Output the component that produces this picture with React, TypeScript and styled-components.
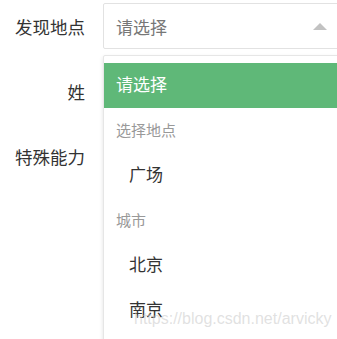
import styled, { createGlobalStyle } from 'styled-components';

const GlobalStyle = createGlobalStyle`
    html, body {
        margin: 0;
        padding: 0;
        background: #fff;
        overflow: hidden;
    }
    body {
        font-family: "Liberation Sans", "Noto Sans CJK SC", sans-serif;
    }
`;

const Page = styled.div`
    position: relative;
    width: 337px;
    height: 339px;
    overflow: hidden;
    padding-top: 3px;
    box-sizing: border-box;
`;

const FormItem = styled.div`
    display: flex;
    align-items: center;
    height: 46px;
    margin-bottom: 19px;
`;

const Label = styled.label`
    width: 85px;
    text-align: right;
    font-size: 17.5px;
    color: #333;
    flex: none;
`;

const SelectWrap = styled.div`
    position: relative;
    margin-left: 18px;
    flex: none;
    width: 260px;
    height: 46px;
`;

const SelectInput = styled.div`
    box-sizing: border-box;
    height: 100%;
    border: 1px solid #e2e2e2;
    border-radius: 2px;
    display: flex;
    align-items: center;
    padding-left: 12px;
    font-size: 17px;
    color: #777;
`;

const Edge = styled.span`
    position: absolute;
    left: 210px;
    top: 20px;
    width: 0;
    height: 0;
    border-left: 7.5px solid transparent;
    border-right: 7.5px solid transparent;
    border-bottom: 7px solid #c2c2c2;
`;

const Dropdown = styled.dl`
    position: absolute;
    top: 52px;
    left: 0;
    width: 260px;
    height: 300px;
    margin: 0;
    padding: 7px 0 0;
    box-sizing: border-box;
    background: #fff;
    border: 1px solid #e6e6e6;
    border-radius: 2px;
    box-shadow: 0 2px 4px rgba(0, 0, 0, 0.12);
    z-index: 2;
`;

const GroupTitle = styled.dt`
    height: 45px;
    line-height: 45px;
    padding-left: 12px;
    font-size: 15px;
    color: #999;
`;

const Option = styled.dd<{ $selected?: boolean; $grouped?: boolean }>`
    margin: 0;
    height: 45px;
    line-height: 45px;
    padding-left: ${p => (p.$grouped ? '25px' : '12px')};
    font-size: 17px;
    color: ${p => (p.$selected ? '#fff' : '#333')};
    background: ${p => (p.$selected ? '#5fb878' : 'transparent')};
`;

const Watermark = styled.div`
    position: absolute;
    left: 134px;
    top: 310px;
    font-family: "Liberation Sans", Arial, sans-serif;
    font-size: 16px;
    color: rgba(200, 200, 200, 0.55);
    z-index: 3;
    pointer-events: none;
`;

export default function App() {
    return (
        <>
            <GlobalStyle />
            <Page>
                <FormItem>
                    <Label>发现地点</Label>
                    <SelectWrap>
                        <SelectInput>请选择</SelectInput>
                        <Edge />
                        <Dropdown>
                            <Option $selected>请选择</Option>
                            <GroupTitle>选择地点</GroupTitle>
                            <Option $grouped>广场</Option>
                            <GroupTitle>城市</GroupTitle>
                            <Option $grouped>北京</Option>
                            <Option $grouped>南京</Option>
                        </Dropdown>
                    </SelectWrap>
                </FormItem>
                <FormItem>
                    <Label>姓</Label>
                </FormItem>
                <FormItem>
                    <Label>特殊能力</Label>
                </FormItem>
                <Watermark>https://blog.csdn.net/arvicky</Watermark>
            </Page>
        </>
    );
}
